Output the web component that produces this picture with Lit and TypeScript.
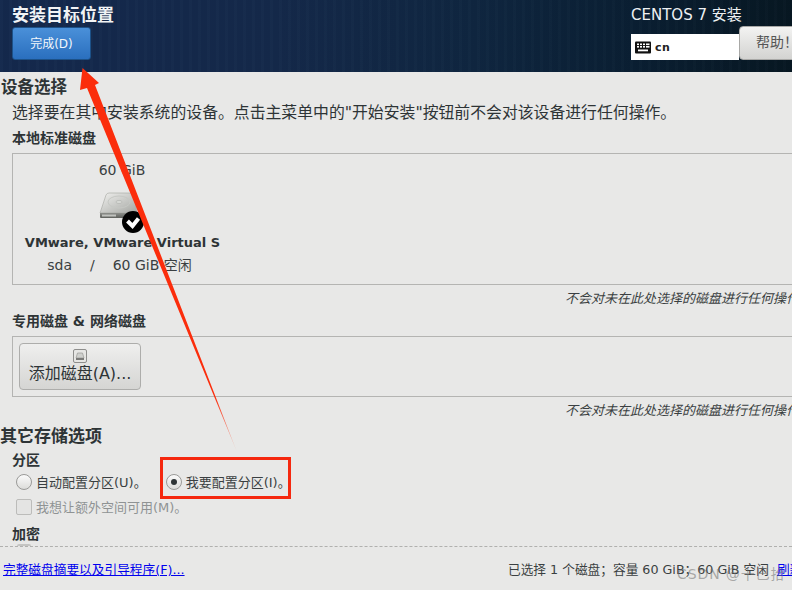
import { LitElement, html, css, svg } from "lit";
import { customElement } from "lit/decorators.js";

@customElement("app-root")
export class AppRoot extends LitElement {
  static styles = css`
    :host {
      display: block;
      width: 792px;
      height: 590px;
      position: relative;
      overflow: hidden;
      background: #e8e8e7;
      color: #2e3436;
      font-family: "DejaVu Sans", "Noto Sans CJK SC", sans-serif;
      font-size: 13px;
      line-height: 1;
    }
    .header {
      height: 72px;
      box-sizing: border-box;
      display: flex;
      justify-content: space-between;
      color: #fff;
      background:
        repeating-linear-gradient(90deg, rgba(255,255,255,.012) 0 3px, rgba(0,0,0,.02) 3px 9px),
        linear-gradient(90deg, #14294d 0%, #14294a 35%, #0f2640 60%, #0a1f33 80%, #071722 100%);
    }
    .hleft { padding: 7px 0 0 12px; }
    .title { font-size: 17px; font-weight: 700; line-height: 17px; color: #f1f3f5; white-space: nowrap; }
    .done {
      width: 79px;
      height: 33px;
      margin-top: 3px;
      box-sizing: border-box;
      display: flex;
      align-items: center;
      justify-content: center;
      border: 1px solid #1c5188;
      border-radius: 3px;
      background: linear-gradient(#4a90d9, #2a6fbe);
      font-size: 12px;
      color: #f3f7fb;
    }
    .hright { width: 161px; padding-top: 7px; box-sizing: border-box; }
    .centos { font-size: 15px; line-height: 16px; color: #eef1f3; white-space: nowrap; }
    .kbrow { display: flex; margin-top: 11px; align-items: flex-start; }
    .kb {
      width: 108px;
      height: 26px;
      flex: none;
      box-sizing: border-box;
      background: #fff;
      color: #222;
      display: flex;
      align-items: center;
      gap: 4px;
      padding-left: 4px;
      font-size: 11px;
      font-weight: 700;
      letter-spacing: .5px;
    }
    .help {
      flex: none;
      width: 70px;
      height: 34px;
      margin-top: -8px;
      box-sizing: border-box;
      border: 1px solid #a8a8a6;
      border-radius: 4px;
      background: linear-gradient(#f3f3f2, #d3d3d1);
      color: #555;
      font-size: 14px;
      padding: 8px 0 0 16px;
      white-space: nowrap;
    }
    .h2 { font-size: 16.5px; font-weight: 700; line-height: 16px; padding-left: 1px; white-space: nowrap; }
    .s1 { margin-top: 8px; }
    .lead { font-size: 15.85px; line-height: 16px; margin: 9px 0 0 12px; white-space: nowrap; }
    .h3 { font-size: 14px; font-weight: 700; line-height: 14px; margin-left: 12px; white-space: nowrap; }
    .h3.local { margin-top: 10px; }
    .box {
      margin: 8px 0 0 12px;
      width: 800px;
      box-sizing: border-box;
      border: 1px solid #b4b4b2;
    }
    .disks { height: 132px; }
    .disk {
      width: 213px;
      display: flex;
      flex-direction: column;
      align-items: center;
      white-space: nowrap;
    }
    .size { font-size: 14px; line-height: 16px; margin-top: 8px; color: #3a3f41; padding-left: 5px; }
    .icon { margin: 8px 0 0 11px; height: 48px; width: 70px; display: block; }
    .name { font-size: 13px; font-weight: 700; line-height: 16px; margin-top: 1px; padding-left: 6px; }
    .free { font-size: 14px; line-height: 16px; margin-top: 6px; color: #3a3f41; display: flex; gap: 18px; }
    .note {
      font-size: 13px;
      font-style: italic;
      line-height: 14px;
      color: #3a3f41;
      white-space: nowrap;
      margin: 7px 0 0 565px;
    }
    .h3.net { margin-top: 8px; }
    .add { height: 61px; padding: 6px 0 0 6px; }
    .addbtn {
      width: 122px;
      height: 47px;
      box-sizing: border-box;
      border: 1px solid #adadab;
      border-radius: 4px;
      background: linear-gradient(#efefee, #d5d5d3);
      display: flex;
      flex-direction: column;
      align-items: center;
      font-size: 16px;
      line-height: 18px;
      padding-top: 5px;
      white-space: nowrap;
    }
    .addbtn svg { display: block; margin-bottom: 2px; }
    .h2.other { margin-top: 10px; font-size: 17px; padding-left: 0; }
    .h3.part { margin-top: 9px; }
    .radios { display: flex; margin: 5px 0 0 16px; align-items: center; height: 20px; }
    .opt { display: flex; align-items: center; gap: 4px; font-size: 13px; white-space: nowrap; color: #3a3f41; }
    .opt.two { margin-left: 19px; }
    .radio {
      width: 16px; height: 16px; box-sizing: border-box; border-radius: 50%;
      border: 1px solid #9a9a98;
      background: linear-gradient(#fbfbfb, #dcdcda);
      display: flex; align-items: center; justify-content: center;
      flex: none;
    }
    .radio i { width: 6px; height: 6px; border-radius: 50%; background: #2e3436; }
    .opt.dis { color: #8f9394; margin: 6px 0 0 16px; height: 18px; }
    .check {
      width: 16px; height: 16px; box-sizing: border-box; border-radius: 2px;
      border: 1px solid #bcbcba; background: #e4e4e3; flex: none;
    }
    .h3.enc { margin-top: 11px; }
    .peek {
      width: 14px; height: 2px; margin: 3px 0 0 17px; background: #c4c4c2; border-radius: 2px 2px 0 0;
    }
    .footer {
      position: absolute;
      left: 0; right: 0; top: 546px; bottom: 0;
      border-top: 1px dashed #b0b0ae;
      display: flex;
      justify-content: space-between;
      padding: 16px 0 0 3px;
      font-size: 12.7px;
      line-height: 14px;
      background: #e8e8e7;
      white-space: nowrap;
    }
    a { color: #0000ee; text-decoration: underline; }
    .sel { width: 284px; flex: none; overflow: hidden; color: #3a3f41; }
    .sel a { margin-left: 4px; }
    .wm {
      position: absolute; left: 677px; top: 566px;
      font-size: 14px; line-height: 16px; letter-spacing: .9px;
      color: rgba(110,110,110,.55);
      white-space: nowrap;
    }
    .overlay { position: absolute; left: 0; top: 0; pointer-events: none; }
    .redbox {
      position: absolute; left: 160px; top: 457px; width: 131px; height: 42px;
      box-sizing: border-box; border: 3px solid #f5280f; pointer-events: none;
    }
  `;

  private disk() {
    return html`<svg class="icon" viewBox="0 0 70 48">
      <defs>
        <linearGradient id="top" x1="0" y1="0" x2="1" y2="1">
          <stop offset="0" stop-color="#f0f0ee"/><stop offset="1" stop-color="#a4a6a2"/>
        </linearGradient>
        <linearGradient id="base" x1="0" y1="0" x2="0" y2="1">
          <stop offset="0" stop-color="#8c8e8a"/><stop offset="1" stop-color="#5e605c"/>
        </linearGradient>
      </defs>
      <path d="M10 27 L16 9 Q17 7 19 7 H44 L47 27 Z" fill="url(#top)" stroke="#a2a49f" stroke-width=".6"/>
      <ellipse cx="29" cy="16" rx="11" ry="6" fill="none" stroke="#c6c8c4"/>
      <ellipse cx="29" cy="16" rx="3" ry="1.6" fill="#d6d8d4" stroke="#a8aaa6" stroke-width=".5"/>
      <path d="M10 27 H47 V31 Q47 32 46 32 H11 Q10 32 10 31 Z" fill="url(#base)"/>
      <rect x="12" y="28.500" width="14" height="2" fill="#c0c2be"/>
      <circle cx="43" cy="36" r="11" fill="#000"/>
      <path d="M37.500 35 L42.500 40 L48.500 32.500" fill="none" stroke="#fff" stroke-width="4"/>
    </svg>`;
  }

  render() {
    return html`
      <div class="header">
        <div class="hleft">
          <div class="title">安装目标位置</div>
          <div class="done">完成(D)</div>
        </div>
        <div class="hright">
          <div class="centos">CENTOS 7 安装</div>
          <div class="kbrow">
            <div class="kb">
              <svg width="16" height="13" viewBox="0 0 16 13">
                <rect x="0" y="0.5" width="16" height="12" rx="1" fill="#111"/>
                ${[2, 5, 8, 11].flatMap((x) => [2.5, 5].map((y) => svg`<rect x=${x} y=${y} width="2" height="1.6" fill="#fff"/>`))}
                <rect x="13" y="2.5" width="1.5" height="1.6" fill="#fff"/>
                <rect x="13" y="5" width="1.5" height="1.6" fill="#fff"/>
                <rect x="3" y="8.5" width="10" height="1.8" fill="#fff"/>
              </svg>
              cn
            </div>
            <div class="help">帮助！</div>
          </div>
        </div>
      </div>

      <div class="h2 s1">设备选择</div>
      <div class="lead">选择要在其中安装系统的设备。点击主菜单中的"开始安装"按钮前不会对该设备进行任何操作。</div>
      <div class="h3 local">本地标准磁盘</div>
      <div class="box disks">
        <div class="disk">
          <div class="size">60 GiB</div>
          ${this.disk()}
          <div class="name">VMware, VMware Virtual S</div>
          <div class="free"><span>sda</span><span>/</span><span>60 GiB 空闲</span></div>
        </div>
      </div>
      <div class="note">不会对未在此处选择的磁盘进行任何操作</div>
      <div class="h3 net">专用磁盘 &amp; 网络磁盘</div>
      <div class="box add">
        <div class="addbtn">
          <svg width="14" height="14" viewBox="0 0 14 14">
            <rect x=".5" y=".5" width="13" height="13" rx="1.5" fill="#e6e6e4" stroke="#8e8e8c"/>
            <path d="M3 9 L4.500 4 H9.500 L11 9 Z" fill="#cfd0cd" stroke="#8e8e8c" stroke-width=".6"/>
            <rect x="3" y="9" width="8" height="2" fill="#7a7a78"/>
          </svg>
          添加磁盘(A)...
        </div>
      </div>
      <div class="note">不会对未在此处选择的磁盘进行任何操作</div>

      <div class="h2 other">其它存储选项</div>
      <div class="h3 part">分区</div>
      <div class="radios">
        <div class="opt"><span class="radio"></span>自动配置分区(U)。</div>
        <div class="opt two"><span class="radio"><i></i></span>我要配置分区(I)。</div>
      </div>
      <div class="opt dis"><span class="check"></span>我想让额外空间可用(M)。</div>
      <div class="h3 enc">加密</div>
      <div class="peek"></div>

      <div class="footer">
        <a>完整磁盘摘要以及引导程序(F)...</a>
        <div class="sel">已选择 1 个磁盘；容量 60 GiB；60 GiB 空闲 <a>刷新(R)</a></div>
      </div>
      <div class="wm">CSDN @十巳拾</div>

      <svg class="overlay" width="792" height="590" viewBox="0 0 792 590">
        <defs>
          <linearGradient id="fade" gradientUnits="userSpaceOnUse" x1="150" y1="230" x2="237" y2="452">
            <stop offset="0" stop-color="#fb2d0c"/>
            <stop offset=".75" stop-color="#fb2d0c"/>
            <stop offset="1" stop-color="#fb2d0c" stop-opacity=".15"/>
          </linearGradient>
        </defs>
        <path d="M82.500 68 L99 83 L95 85 L237 452 L87 88 L80 90 Z" fill="url(#fade)"/>
      </svg>
      <div class="redbox"></div>
    `;
  }
}
